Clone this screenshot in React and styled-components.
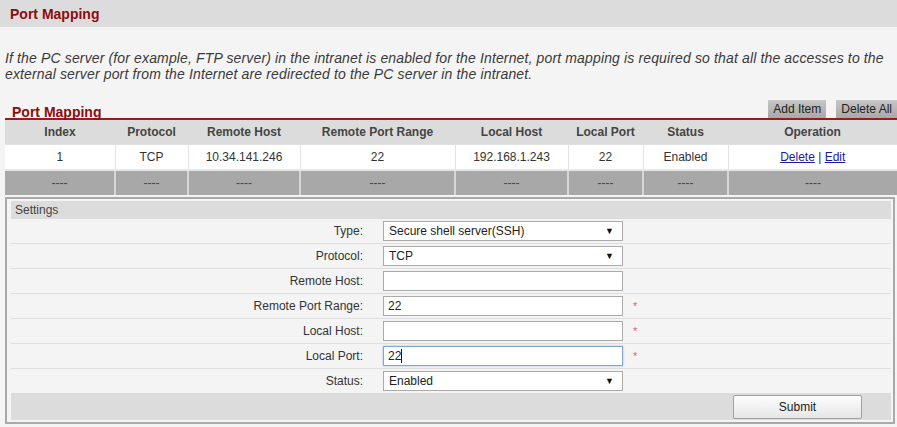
import React from 'react';
import styled, { createGlobalStyle } from 'styled-components';

const GlobalStyle = createGlobalStyle`
  html, body {
    margin: 0;
    padding: 0;
    background: #f4f4f4;
    font-family: "Liberation Sans", Arial, sans-serif;
    font-size: 12px;
    color: #333;
  }
`;

const Page = styled.div`
  width: 897px;
  height: 427px;
  overflow: hidden;
  background: #f4f4f4;
`;

const TopBar = styled.div`
  height: 27px;
  background: #dcdcdc;
  display: flex;
  align-items: center;
  padding-left: 10px;
  margin-bottom: 23px;
`;

const Title = styled.h1`
  margin: 0;
  font-size: 14px;
  font-weight: bold;
  color: #8e0c0c;
`;

const Description = styled.p`
  margin: 0 0 0 5px;
  font-size: 14px;
  letter-spacing: 0.14px;
  font-style: italic;
  line-height: 16px;
  color: #3a3a3a;
  white-space: nowrap;
`;

const SectionHead = styled.div`
  margin: 18px 0 0 5px;
  display: flex;
  align-items: flex-end;
  justify-content: space-between;
  border-bottom: 2px solid #9b1a1a;
  height: 18px;
`;

const SectionTitle = styled.h2`
  margin: 0 0 -2px 7px;
  font-size: 14px;
  font-weight: bold;
  color: #8e0c0c;
  line-height: 16px;
`;

const ButtonGroup = styled.div`
  display: flex;
  gap: 10px;
  align-self: stretch;
`;

const GreyButton = styled.button`
  height: 18px;
  padding: 0 5px;
  border: none;
  background: linear-gradient(#c6c6c6, #a9a9a9);
  font-family: inherit;
  font-size: 12px;
  color: #222;
  cursor: pointer;
`;

const Table = styled.table`
  margin-left: 5px;
  width: 892px;
  border-collapse: collapse;
  table-layout: fixed;
`;

const Th = styled.th`
  height: 24px;
  background: #dcdcdc;
  font-weight: bold;
  font-size: 12px;
  color: #444;
  text-align: center;
  padding: 0;
`;

const Td = styled.td`
  height: 24px;
  background: #fff;
  text-align: center;
  padding: 0;
  color: #333;
  border-left: 1px solid #e2e2e2;
  border-top: 1px solid #e2e2e2;
  &:first-child { border-left: none; }
`;

const DashTd = styled.td`
  height: 24px;
  background: #a8a8a8;
  text-align: center;
  padding: 0;
  color: #444;
  border-left: 2px solid #d6d6d6;
  border-top: 2px solid #e6e6e6;
  &:first-child { border-left: none; }
`;

const OpLink = styled.a`
  color: #1a1aa6;
  text-decoration: underline;
  cursor: pointer;
`;

const Panel = styled.div`
  margin: 2px 2px 0 5px;
  border: 2px solid #a9a9a9;
  padding: 2px 2px 3px 4px;
  height: 218px;
  box-sizing: content-box;
`;

const SettingsBar = styled.div`
  height: 18px;
  background: #dcdcdc;
  display: flex;
  align-items: center;
  padding-left: 4px;
  color: #444;
`;

const Row = styled.div`
  display: grid;
  grid-template-columns: 372px 240px 1fr;
  align-items: center;
  height: 24px;
  border-bottom: ${p => (p.$last ? 'none' : '1px solid #dedede')};
`;

const Label = styled.label`
  text-align: right;
  padding-right: 20px;
  color: #333;
`;

const FieldWrap = styled.div`
  position: relative;
  width: 240px;
  height: 20px;
`;

const Field = styled.input`
  box-sizing: border-box;
  width: 240px;
  height: 20px;
  border: 1px solid ${p => (p.$focus ? '#7fa6d6' : '#aaa')};
  background: #fff;
  font-family: inherit;
  font-size: 12px;
  padding: 0 4px;
  color: #222;
  outline: none;
  box-shadow: ${p => (p.$focus ? '0 0 2px #9fc0ea' : 'none')};
`;

const Caret = styled.span`
  position: absolute;
  left: 18px;
  top: 3px;
  width: 1px;
  height: 14px;
  background: #111;
`;

const SelectBox = styled.div`
  box-sizing: border-box;
  width: 240px;
  height: 20px;
  border: 1px solid #aaa;
  background: #fff;
  display: flex;
  align-items: center;
  justify-content: space-between;
  padding: 0 8px 0 5px;
  color: #222;
`;

const Arrow = styled.span`
  font-size: 9px;
  color: #111;
`;

const Required = styled.span`
  color: #e0607a;
  font-size: 11px;
  margin-left: 10px;
`;

const Footer = styled.div`
  height: 27px;
  background: #dcdcdc;
  display: flex;
  align-items: center;
  justify-content: flex-end;
  padding-right: 29px;
`;

const SubmitButton = styled.button`
  width: 129px;
  height: 24px;
  border: 1px solid #a0a0a0;
  border-radius: 2px;
  background: linear-gradient(#fdfdfd, #e6e6e6);
  font-family: inherit;
  font-size: 12px;
  color: #222;
  cursor: pointer;
`;

const columns = [
  ['Index', 110],
  ['Protocol', 73],
  ['Remote Host', 112],
  ['Remote Port Range', 155],
  ['Local Host', 113],
  ['Local Port', 75],
  ['Status', 85],
  ['Operation', 169],
];

const entries = [
  { index: 1, protocol: 'TCP', remote: '10.34.141.246', range: '22', local: '192.168.1.243', port: '22', status: 'Enabled' },
];

const fields = [
  { label: 'Type:', kind: 'select', value: 'Secure shell server(SSH)' },
  { label: 'Protocol:', kind: 'select', value: 'TCP' },
  { label: 'Remote Host:', kind: 'input', value: '' },
  { label: 'Remote Port Range:', kind: 'input', value: '22', required: true },
  { label: 'Local Host:', kind: 'input', value: '', required: true },
  { label: 'Local Port:', kind: 'input', value: '22', required: true, focus: true },
  { label: 'Status:', kind: 'select', value: 'Enabled' },
];

export default function App() {
  return (
    <Page>
      <GlobalStyle />
      <TopBar>
        <Title>Port Mapping</Title>
      </TopBar>
      <Description>
        If the PC server (for example, FTP server) in the intranet is enabled for the Internet, port mapping is required so that all the accesses to the
        <br />
        external server port from the Internet are redirected to the PC server in the intranet.
      </Description>

      <SectionHead>
        <SectionTitle>Port Mapping</SectionTitle>
        <ButtonGroup>
          <GreyButton>Add Item</GreyButton>
          <GreyButton>Delete All</GreyButton>
        </ButtonGroup>
      </SectionHead>

      <Table>
        <colgroup>
          {columns.map(([name, w]) => (
            <col key={name} style={{ width: w }} />
          ))}
        </colgroup>
        <thead>
          <tr>
            {columns.map(([name]) => (
              <Th key={name}>{name}</Th>
            ))}
          </tr>
        </thead>
        <tbody>
          {entries.map(e => (
            <tr key={e.index}>
              <Td>{e.index}</Td>
              <Td>{e.protocol}</Td>
              <Td>{e.remote}</Td>
              <Td>{e.range}</Td>
              <Td>{e.local}</Td>
              <Td>{e.port}</Td>
              <Td>{e.status}</Td>
              <Td>
                <OpLink>Delete</OpLink> | <OpLink>Edit</OpLink>
              </Td>
            </tr>
          ))}
          <tr>
            {columns.map(([name]) => (
              <DashTd key={name}>----</DashTd>
            ))}
          </tr>
        </tbody>
      </Table>

      <Panel>
        <SettingsBar>Settings</SettingsBar>
        {fields.map((f, i) => (
          <Row key={f.label} $last={i === fields.length - 1}>
            <Label>{f.label}</Label>
            {f.kind === 'select' ? (
              <SelectBox>
                <span>{f.value}</span>
                <Arrow>▼</Arrow>
              </SelectBox>
            ) : (
              <FieldWrap>
                <Field readOnly $focus={f.focus} value={f.value} />
                {f.focus && <Caret />}
              </FieldWrap>
            )}
            <span>{f.required && <Required>*</Required>}</span>
          </Row>
        ))}
        <Footer>
          <SubmitButton>Submit</SubmitButton>
        </Footer>
      </Panel>
    </Page>
  );
}
